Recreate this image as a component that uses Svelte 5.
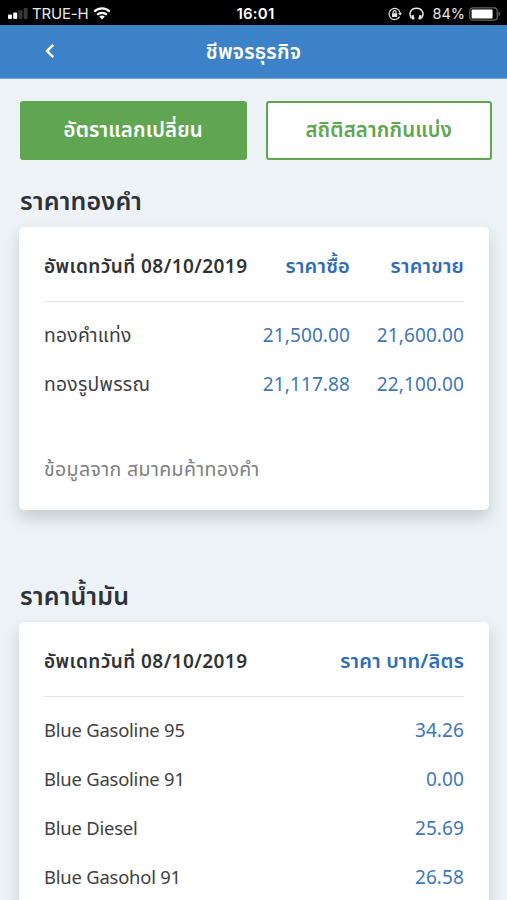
<script lang="ts">
	const gold = [
		{ name: 'ทองคำแท่ง', buy: '21,500.00', sell: '21,600.00' },
		{ name: 'ทองรูปพรรณ', buy: '21,117.88', sell: '22,100.00' },
	]

	const oil = [
		{ name: 'Blue Gasoline 95', price: '34.26' },
		{ name: 'Blue Gasoline 91', price: '0.00' },
		{ name: 'Blue Diesel', price: '25.69' },
		{ name: 'Blue Gasohol 91', price: '26.58' },
	]
</script>

<div class="screen">
	<div class="status">
		<div class="side">
			<svg class="signal" width="20" height="12" viewBox="0 0 20 12">
				<rect x="0" y="6.5" width="4" height="4.5" rx="1" fill="#fff" />
				<rect x="5.2" y="4.5" width="4" height="6.5" rx="1" fill="#fff" />
				<rect x="10.4" y="2.3" width="4" height="8.7" rx="1" fill="#383838" />
				<rect x="15.6" y="0" width="4" height="11" rx="1" fill="#383838" />
			</svg>
			<span class="carrier">TRUE-H</span>
			<svg width="18" height="13" viewBox="0 0 18 13" fill="none" stroke="#fff" stroke-width="2.2">
				<path d="M1.2 4.7C5.5.3 12.5.3 16.8 4.7" />
				<path d="M4.1 7.8C6.9 5.1 11.1 5.1 13.9 7.8" />
				<path d="M6.2 9.6C7.8 8.1 10.2 8.1 11.8 9.6L9 12.4Z" fill="#fff" stroke="none" />
			</svg>
		</div>
		<span class="clock">16:01</span>
		<div class="side right">
			<svg class="lock" width="14" height="14" viewBox="0 0 14 14" fill="none" stroke="#e4e4e4" stroke-width="1.2">
				<path d="M11.6 9.6A5.6 5.6 0 1 1 12.2 6.2" />
				<path d="M10.2 6h3.8l-1.8 2.6z" fill="#e4e4e4" stroke="none" />
				<rect x="4" y="6.3" width="5.2" height="3.8" rx=".5" fill="#e4e4e4" stroke="none" />
				<path d="M5.1 6.6V5.2a1.5 1.5 0 0 1 3 0v1.4" />
			</svg>
			<svg class="phones" width="15" height="14" viewBox="0 0 15 14" fill="none" stroke="#e4e4e4" stroke-width="1.5">
				<path d="M2.6 11.5C-1.2 6 2.3 1.2 7.5 1.2s8.7 4.8 4.9 10.3" />
				<path d="M3.4 8.2l1.2 4.2M11.6 8.2l-1.2 4.2" stroke-width="2.4" />
			</svg>
			<span class="percent">84%</span>
			<svg width="32" height="14" viewBox="0 0 32 14">
				<rect x=".8" y=".8" width="27.4" height="12.4" rx="3.2" fill="none" stroke="#666" stroke-width="1.2" />
				<rect x="2.6" y="2.5" width="21" height="9" rx="1" fill="#fff" />
				<path d="M29.6 4.8c2 .8 2 3.6 0 4.4z" fill="#777" />
			</svg>
		</div>
	</div>

	<header>
		<svg class="back" width="10" height="16" viewBox="0 0 10 16" fill="none" stroke="#fff" stroke-width="2.5">
			<path d="M8.2 1.8L2 8l6.2 6.2" />
		</svg>
		<h1>ชีพจรธุรกิจ</h1>
	</header>

	<main>
		<nav>
			<button class="exchange">อัตราแลกเปลี่ยน</button>
			<button class="lottery">สถิติสลากกินแบ่ง</button>
		</nav>

		<h2 class="gold-title">ราคาทองคำ</h2>
		<section class="gold">
			<div class="row head">
				<span class="date">อัพเดทวันที่ 08/10/2019</span>
				<span class="num">ราคาซื้อ</span>
				<span class="num">ราคาขาย</span>
			</div>
			{#each gold as item}
				<div class="row">
					<span class="thai">{item.name}</span>
					<span class="num">{item.buy}</span>
					<span class="num">{item.sell}</span>
				</div>
			{/each}
			<p>ข้อมูลจาก สมาคมค้าทองคำ</p>
		</section>

		<h2 class="oil-title">ราคาน้ำมัน</h2>
		<section class="oil">
			<div class="row head">
				<span class="date">อัพเดทวันที่ 08/10/2019</span>
				<span class="num">ราคา บาท/ลิตร</span>
			</div>
			{#each oil as item}
				<div class="row">
					<span class="fuel">{item.name}</span>
					<span class="num">{item.price}</span>
				</div>
			{/each}
		</section>
	</main>
</div>

<style>
	:global(body) {
		margin: 0;
		overflow: hidden;
	}

	.screen {
		height: 900px;
		overflow: hidden;
		background: #edf2f6;
		color: #3e4043;
		font-family: 'Noto Sans', 'Noto Sans Thai', sans-serif;
		white-space: nowrap;
	}

	.status {
		display: grid;
		grid-template-columns: 1fr auto 1fr;
		align-items: center;
		height: 25px;
		padding: 2px 8px 0 8px;
		box-sizing: border-box;
		background: #000;
		color: #e8e8e8;
		font: 15px/23px Inter, sans-serif;
	}

	.side {
		display: flex;
		align-items: center;
	}

	.right {
		justify-content: flex-end;
		margin-right: -2px;
	}

	.carrier {
		margin: 0 5px 0 4px;
		letter-spacing: -0.2px;
	}

	.clock {
		margin-left: 4px;
		color: #fff;
		font-weight: 600;
		letter-spacing: 0.2px;
	}

	.lock {
		margin-right: 7px;
	}

	.phones {
		margin-right: 8px;
	}

	.percent {
		margin-right: 4px;
		font-size: 14.5px;
	}

	header {
		display: grid;
		grid-template-columns: 55px 1fr 55px;
		align-items: center;
		height: 54px;
		box-sizing: border-box;
		border-bottom: 1px solid #6eaae0;
		background: #3c82c8;
		color: #fff;
	}

	.back {
		justify-self: end;
		margin-bottom: 1px;
	}

	h1 {
		margin: 0;
		padding-top: 2px;
		font-size: 20.5px;
		font-weight: 600;
		letter-spacing: 0.2px;
		text-align: center;
	}

	main {
		padding: 22px 15px 0 20px;
	}

	nav {
		display: grid;
		grid-template-columns: 1fr 1fr;
		gap: 19px;
	}

	button {
		height: 59px;
		padding: 0;
		border: 2px solid #60a552;
		border-radius: 3px;
		background: #fff;
		color: #60a552;
		font: 600 20.4px 'Noto Sans', 'Noto Sans Thai', sans-serif;
		letter-spacing: 0.15px;
	}

	.exchange {
		background: #60a552;
		color: #fff;
	}

	h2 {
		height: 36px;
		margin: 0;
		color: #2f3237;
		font-size: 25px;
		font-weight: 600;
		line-height: 32px;
		letter-spacing: 0.2px;
	}

	.gold-title {
		margin-top: 24px;
	}

	.oil-title {
		margin-top: 69px;
	}

	section {
		width: 470px;
		margin: 7px 0 0 -1px;
		padding: 0 25px;
		box-sizing: border-box;
		border-radius: 5px;
		background: #fff;
		box-shadow: 0 8px 16px rgba(0, 0, 0, 0.16);
	}

	.gold {
		height: 283px;
	}

	.oil {
		height: 400px;
	}

	.row {
		display: grid;
		grid-template-columns: 1fr 114px;
		align-items: center;
		height: 49px;
		padding-bottom: 4px;
		box-sizing: border-box;
		font-size: 19px;
		line-height: 26px;
	}

	.gold .row {
		grid-template-columns: 1fr 100px 114px;
	}

	.row.head {
		height: 75px;
		margin-bottom: 10px;
		padding: 3px 0 0;
		border-bottom: 1px solid #e6e6e6;
		color: #2f3237;
		font-weight: 600;
	}

	.date {
		letter-spacing: 0.43px;
	}

	.thai {
		padding-top: 1px;
		font-size: 19.3px;
		letter-spacing: 0.25px;
	}

	.fuel {
		font-size: 18.4px;
		letter-spacing: -0.2px;
	}

	.num {
		justify-self: end;
		color: #3d77bb;
		letter-spacing: 0.1px;
	}

	.head .num {
		color: #2f6db5;
		font-size: 20px;
		letter-spacing: 0.2px;
	}

	p {
		margin: 46px 0 0;
		color: #7c8084;
		font-size: 19.5px;
		line-height: 26px;
		letter-spacing: 0.38px;
	}
</style>
